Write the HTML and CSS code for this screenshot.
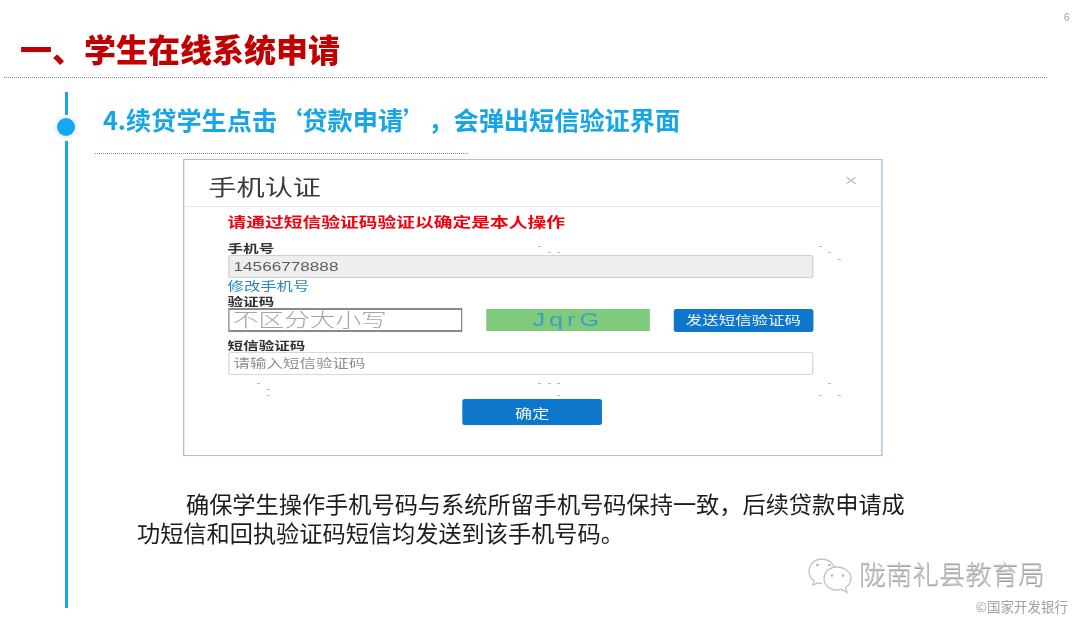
FILE: index.html
```html
<!DOCTYPE html>
<html lang="zh-CN">
<head>
<meta charset="utf-8">
<title>学生在线系统申请</title>
<link rel="stylesheet" href="styles.css">
</head>
<body>
<main class="slide">
  <span class="page-num">6</span>
  <header class="head"><h1 class="title">一、学生在线系统申请</h1></header>

  <div class="timeline">
    <span class="tl-seg tl-top"></span>
    <span class="tl-dot"></span>
    <span class="tl-seg tl-bottom"></span>
  </div>

  <h2 class="subhead">4.续贷学生点击‘贷款申请’<span class="punct">，</span>会弹出短信验证界面</h2>

  <section class="dialog-wrap">
    <div class="dialog">
      <div class="dialog-head">
        <span class="dialog-title">手机认证</span>
        <span class="dialog-close">×</span>
      </div>
      <div class="dialog-body">
        <p class="notice">请通过短信验证码验证以确定是本人操作</p>
        <label class="lbl lbl-phone">手机号</label>
        <input class="field field-off" value="14566778888" readonly>
        <a class="link">修改手机号</a>
        <label class="lbl lbl-code">验证码</label>
        <div class="captcha-row">
          <div class="captcha-input" role="textbox">不区分大小写</div>
          <span class="captcha-img">JqrG</span>
          <button class="btn btn-send">发送短信验证码</button>
        </div>
        <label class="lbl lbl-sms">短信验证码</label>
        <input class="field" placeholder="请输入短信验证码">
        <div class="actions"><button class="btn btn-ok">确定</button></div>
      </div>
    </div>
  </section>

  <p class="body-text">确保学生操作手机号码与系统所留手机号码保持一致<span class="punct">，</span>后续贷款申请成<br>功短信和回执验证码短信均发送到该手机号码。</p>

  <svg class="specks" width="1080" height="623" viewBox="0 0 1080 623" aria-hidden="true">
    <g fill="#b9b9b9">
      <rect x="538" y="246" width="3" height="1"/><rect x="548" y="252" width="3" height="1"/><rect x="557" y="252" width="3" height="1"/>
      <rect x="819" y="246" width="3" height="1"/><rect x="828" y="252" width="3" height="1"/><rect x="838" y="259" width="3" height="1"/>
      <rect x="257" y="383" width="3" height="1"/><rect x="267" y="389" width="3" height="1"/><rect x="267" y="395" width="3" height="1"/>
      <rect x="538" y="383" width="3" height="1"/><rect x="548" y="383" width="3" height="1"/><rect x="557" y="383" width="3" height="1"/><rect x="557" y="395" width="3" height="1"/>
      <rect x="828" y="383" width="3" height="1"/><rect x="819" y="395" width="3" height="1"/><rect x="838" y="395" width="3" height="1"/>
    </g>
  </svg>

  <div class="mark">
    <div class="mark-main">
      <svg class="wechat" width="44" height="38" viewBox="0 0 44 38" aria-hidden="true">
        <g fill="none" stroke="#c2c2c2" stroke-width="1.300">
          <path d="M14 27.500c-1.500 0-3-.2-4.300-.7L5 29l1-4.300C3 22.600 1 19.300 1 15.500 1 8.600 6.800 3 14 3c6.300 0 11.600 4.200 12.800 9.800"/>
          <path d="M29 11c-7.200 0-13 5-13 11.500S21.800 34 29 34c1.500 0 3-.2 4.300-.7L39 36.500l-1.500-5c3.300-2.200 5.500-5.300 5.500-9C43 16 36.200 11 29 11z" fill="#fff"/>
        </g>
        <g fill="#b4b4b4">
          <circle cx="9.500" cy="9" r="1.300"/><circle cx="21.500" cy="9" r="1.300"/>
          <circle cx="24" cy="19.500" r="1.300"/><circle cx="35" cy="19.500" r="1.300"/>
        </g>
      </svg>
      <span class="mark-name">陇南礼县教育局</span>
    </div>
    <div class="mark-sub">©国家开发银行</div>
  </div>
</main>
</body>
</html>
```

FILE: styles.css
```css
* { box-sizing: border-box; }
html, body { margin: 0; padding: 0; background: #fff; }
body {
  font-family: "Noto Sans CJK SC", "Liberation Sans", sans-serif;
  text-spacing-trim: space-all;
}

.slide {
  position: relative;
  width: 1080px;
  height: 623px;
  overflow: hidden;
  background: #fff;
  filter: blur(0.3px);
}

.page-num {
  position: absolute;
  top: 12px;
  left: 1064px;
  font: 10px/12px "Liberation Sans", sans-serif;
  color: #9a9a9a;
}

.head {
  margin: 0 33px 0 4px;
  height: 78px;
  padding: 31px 0 0 16px;
  border-bottom: 1px dotted #8a8a8a;
}
.title {
  margin: 0;
  font-size: 32px;
  line-height: 34px;
  font-weight: 900;
  color: #c00000;
  white-space: nowrap;
}

.timeline {
  position: absolute;
  left: 52px;
  top: 92px;
  width: 28px;
  height: 516px;
  display: flex;
  flex-direction: column;
  align-items: center;
}
.tl-seg { width: 3px; background: #17a6e8; }
.tl-top { height: 23px; }
.tl-bottom { flex: 1; }
.tl-dot {
  width: 18px;
  height: 18px;
  margin: 3px 0 5px;
  border-radius: 50%;
  background: #11a8f0;
  box-shadow: 0 0 0 3px #f2f5f8;
}

.subhead {
  margin: 0 0 0 95px;
  width: 373px;
  height: 76px;
  padding: 24px 0 0 8px;
  font-size: 25.200px;
  line-height: 34px;
  font-weight: 700;
  color: #17a6e5;
  white-space: nowrap;
  border-bottom: 1px dotted #8a8a8a;
}
.punct { font-family: "Noto Sans CJK TC", "Noto Sans CJK SC", sans-serif; }

.dialog-wrap {
  margin: 5px 0 0 183px;
  height: 297px;
}
.dialog {
  width: 526.300px;
  height: 297px;
  border: 1.500px solid #a9c1da;
  background: #fff;
  transform: scaleX(1.33);
  transform-origin: left top;
  filter: blur(0.3px);
}
.dialog-head {
  height: 47px;
  padding: 0 18px 0 18px;
  display: flex;
  align-items: center;
  justify-content: space-between;
  border-bottom: 1px solid #e3e6e9;
}
.dialog-title {
  font-size: 21.200px;
  line-height: 30px;
  color: #3c3c3c;
  margin-top: 5px;
}
.dialog-close {
  font: 17px/20px "Liberation Sans", sans-serif;
  color: #c4c4c4;
  margin-top: -4px;
}
.dialog-body { padding: 0 0 0 32.500px; display: flex; flex-direction: column; align-items: flex-start; }

.notice {
  margin: 6px 0 0;
  font-size: 14.100px;
  line-height: 16px;
  font-weight: 700;
  color: #f5000f;
  white-space: nowrap;
}
.lbl {
  font-size: 11.700px;
  line-height: 14px;
  height: 14px;
  font-weight: 700;
  color: #333;
}
.lbl-phone { margin-top: 12px; }
.lbl-code { margin-top: 1px; }
.lbl-sms { margin-top: 6px; }
.link {
  margin-top: 1px;
  font-size: 12.300px;
  line-height: 14px;
  height: 14px;
  color: #2a86c8;
}

.field {
  display: block;
  width: 440.600px;
  height: 23px;
  padding: 0 3.500px;
  font-family: "Liberation Sans", "Noto Sans CJK SC", sans-serif;
  font-size: 11px;
  color: #555;
  background: #fff;
  border: 1px solid #d8d8d8;
  border-radius: 2px;
  outline: none;
}
.field::placeholder { color: #8f8f8f; font-family: "Noto Sans CJK SC", sans-serif; font-size: 12.400px; opacity: 1; }
.field-off {
  background: #eeeeee;
  border-color: #cfcfcf;
  font-size: 12.900px;
  color: #5f5f5f;
}

.captcha-row {
  display: flex;
  align-items: center;
  width: 440.600px;
  height: 24px;
}
.captcha-input {
  width: 176.500px;
  height: 24px;
  padding: 0 3px;
  font-size: 19.300px;
  line-height: 19px;
  font-weight: 300;
  color: #a6a6a6;
  white-space: nowrap;
  border-style: solid;
  border-color: #8a8a8a;
  border-width: 2px 1.500px;
  background: #fff;
}
.captcha-img {
  width: 122.600px;
  height: 22px;
  margin-left: 18px;
  display: flex;
  align-items: center;
  justify-content: center;
  background: #7fcb7c;
  font: 19px/22px "Liberation Sans", sans-serif;
  letter-spacing: 3px;
  color: #3a9fc4;
}
.btn {
  font-family: "Noto Sans CJK SC", sans-serif;
  color: #f4f8fc;
  background: #0e76cb;
  border: 0;
  border-radius: 2px;
  padding: 0;
  white-space: nowrap;
}
.btn-send {
  width: 104.500px;
  height: 23px;
  margin-left: 18.500px;
  font-size: 12.400px;
}
.actions { width: 523px; margin: 24px 0 0 -32.500px; display: flex; justify-content: center; }
.btn-ok { width: 104.500px; height: 26px; font-size: 12.800px; }

.body-text {
  margin: 33px 0 0 137px;
  width: 772px;
  font-size: 23.200px;
  line-height: 29px;
  text-indent: 49px;
  color: #1c1c1c;
}

.specks { position: absolute; left: 0; top: 0; pointer-events: none; }

.mark {
  position: absolute;
  left: 808px;
  top: 554px;
  width: 262px;
}
.mark-main { display: flex; align-items: center; height: 38px; }
.wechat { flex: none; margin-top: 4px; }
.mark-name {
  margin-left: 7px;
  font-size: 26.500px;
  line-height: 38px;
  font-weight: 300;
  white-space: nowrap;
  color: #c6c6c6;
  text-shadow: 0.500px 0.500px 0 #a0a0a0;
}
.mark-sub {
  margin-top: 5px;
  text-align: right;
  padding-right: 2px;
  font-size: 13.500px;
  line-height: 18px;
  color: #a2a2a2;
}
```
